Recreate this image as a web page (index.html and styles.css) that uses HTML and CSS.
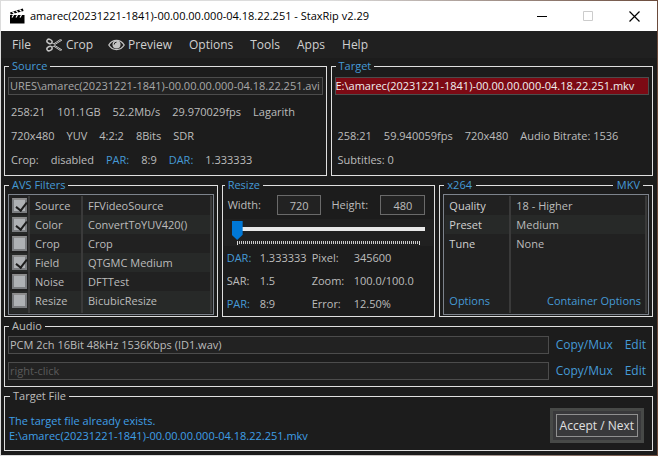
FILE: index.html
```html
<!DOCTYPE html>
<html lang="en">

<head>
    <meta charset="UTF-8">
    <meta name="viewport" content="width=device-width, initial-scale=1.0">
    <title>StaxRip</title>
    <link rel="stylesheet" href="styles.css">
</head>

<body>
    <div class="window">
        <header class="titlebar">
            <svg class="app-icon" viewBox="0 0 15 16" width="15" height="16">
                <path d="M0 4.600 12.800 0.400 13.600 3 0.800 6.600z" fill="#000" />
                <path d="M0 7h14.500v8.500H0z" fill="#000" />
                <path d="M2.500 3.800l2 2M6 2.600l2 2M9.500 1.500l2 2" stroke="#fff" stroke-width="1.300" />
                <path d="M2 9.500l1.500-2.500M6 9.500l1.500-2.500M10 9.500l1.500-2.500" stroke="#fff" stroke-width="1.200" />
            </svg>
            <span class="title">amarec(20231221-1841)-00.00.00.000-04.18.22.251 - StaxRip v2.29</span>
            <div class="window-buttons">
                <button type="button" aria-label="Minimize">
                    <svg viewBox="0 0 11 11" width="11" height="11"><path d="M0 5.500h10" stroke="#000" /></svg>
                </button>
                <button type="button" aria-label="Maximize" disabled>
                    <svg viewBox="0 0 11 11" width="11" height="11"><path d="M.5.5h9v9h-9z" fill="none" stroke="#ccc" /></svg>
                </button>
                <button type="button" aria-label="Close">
                    <svg viewBox="0 0 11 11" width="11" height="11"><path d="M.5.5l10 10M10.500.5l-10 10" stroke="#000" stroke-width="1.200" /></svg>
                </button>
            </div>
        </header>

        <nav class="menu">
            <button type="button">File</button>
            <button type="button">
                <svg viewBox="0 0 17 14" width="17" height="14" fill="none" stroke="#c4c4c4">
                    <ellipse cx="3.500" cy="3.400" rx="2.700" ry="2" transform="rotate(25 3.500 3.400)" stroke-width="1.500" />
                    <ellipse cx="3.500" cy="10.600" rx="2.700" ry="2" transform="rotate(-25 3.500 10.600)" stroke-width="1.500" />
                    <path d="M5.800 4.800 9 6.400 15.800 2.200 14 1.700 8 5.700M5.800 9.200 9 7.600l6.800 4.200-1.800.5L8 8.300" />
                </svg>
                Crop
            </button>
            <button type="button">
                <svg viewBox="0 0 17 14" width="17" height="14">
                    <path d="M.8 7C4.500.9 12.500.9 16.200 7 12.500 13.100 4.500 13.100.8 7z" fill="none" stroke="#c4c4c4" stroke-width="1.300" />
                    <circle cx="8.500" cy="6.500" r="4" fill="#c4c4c4" />
                    <path d="M6.200 6.500a2.300 2.300 0 0 1 2.300-2.300" fill="none" stroke="#202020" />
                </svg>
                Preview
            </button>
            <button type="button">Options</button>
            <button type="button">Tools</button>
            <button type="button">Apps</button>
            <button type="button">Help</button>
        </nav>

        <main>
            <div class="row two">
                <fieldset class="files">
                    <legend><a href="#">Source</a></legend>
                    <input class="source-file" type="text" aria-label="Source" value="URES\amarec(20231221-1841)-00.00.00.000-04.18.22.251.avi">
                    <div class="info">
                        <div><span>258:21</span><span>101.1GB</span><span>52.2Mb/s</span><span>29.970029fps</span><span>Lagarith</span></div>
                        <div><span>720x480</span><span>YUV</span><span>4:2:2</span><span>8Bits</span><span>SDR</span></div>
                        <div><span>Crop:</span><span>disabled</span><a href="#">PAR:</a><span>8:9</span><a href="#">DAR:</a><span>1.333333</span></div>
                    </div>
                </fieldset>
                <fieldset class="files">
                    <legend><a href="#">Target</a></legend>
                    <input class="exists" type="text" aria-label="Target" value="E:\amarec(20231221-1841)-00.00.00.000-04.18.22.251.mkv">
                    <div class="info">
                        <div></div>
                        <div><span>258:21</span><span>59.940059fps</span><span>720x480</span><span>Audio Bitrate: 1536</span></div>
                        <div><span>Subtitles: 0</span></div>
                    </div>
                </fieldset>
            </div>

            <div class="row three">
                <fieldset>
                    <legend><a href="#">AVS Filters</a></legend>
                    <table class="list filters">
                        <tr><td><input type="checkbox" id="f-source" checked></td><td><label for="f-source">Source</label></td><td>FFVideoSource</td></tr>
                        <tr><td><input type="checkbox" id="f-color" checked></td><td><label for="f-color">Color</label></td><td>ConvertToYUV420()</td></tr>
                        <tr><td><input type="checkbox" id="f-crop"></td><td><label for="f-crop">Crop</label></td><td>Crop</td></tr>
                        <tr><td><input type="checkbox" id="f-field" checked></td><td><label for="f-field">Field</label></td><td>QTGMC Medium</td></tr>
                        <tr><td><input type="checkbox" id="f-noise"></td><td><label for="f-noise">Noise</label></td><td>DFTTest</td></tr>
                        <tr><td><input type="checkbox" id="f-resize"></td><td><label for="f-resize">Resize</label></td><td>BicubicResize</td></tr>
                    </table>
                </fieldset>

                <fieldset class="resize">
                    <legend><a href="#">Resize</a></legend>
                    <div class="size">
                        <label for="width">Width:</label>
                        <input type="text" id="width" value="720">
                        <label for="height">Height:</label>
                        <input type="text" id="height" value="480">
                    </div>
                    <div class="slider">
                        <input type="range" min="0" max="90" value="0" aria-label="Size">
                        <div class="ticks"></div>
                    </div>
                    <div class="ratios">
                        <a href="#">DAR:</a><span>1.333333</span><span>Pixel:</span><span>345600</span>
                        <span>SAR:</span><span>1.5</span><span>Zoom:</span><span>100.0/100.0</span>
                        <a href="#">PAR:</a><span>8:9</span><span>Error:</span><span>12.50%</span>
                    </div>
                </fieldset>

                <fieldset>
                    <legend class="split"><a href="#">x264</a><span class="line"></span><a href="#">MKV</a></legend>
                    <table class="list encoder">
                        <tbody>
                            <tr><td>Quality</td><td>18 - Higher</td></tr>
                            <tr><td>Preset</td><td>Medium</td></tr>
                            <tr><td>Tune</td><td>None</td></tr>
                        </tbody>
                        <tfoot>
                            <tr><td><a href="#">Options</a></td><td><a href="#">Container Options</a></td></tr>
                        </tfoot>
                    </table>
                </fieldset>
            </div>

            <fieldset class="audio">
                <legend>Audio</legend>
                <div class="track">
                    <input type="text" aria-label="Audio track 1" value="PCM 2ch 16Bit 48kHz 1536Kbps (ID1.wav)">
                    <a href="#">Copy/Mux</a>
                    <a href="#">Edit</a>
                </div>
                <div class="track">
                    <input type="text" aria-label="Audio track 2" placeholder="right-click">
                    <a href="#">Copy/Mux</a>
                    <a href="#">Edit</a>
                </div>
            </fieldset>

            <fieldset class="target-file">
                <legend>Target File</legend>
                <div class="assistant">
                    <p>The target file already exists.<br>E:\amarec(20231221-1841)-00.00.00.000-04.18.22.251.mkv</p>
                    <button type="button"><span>Accept / Next</span></button>
                </div>
            </fieldset>
        </main>
    </div>
</body>

</html>
```
FILE: styles.css
```css
* {
    box-sizing: border-box;
}

body {
    margin: 0;
    padding: 1px;
    min-height: 100vh;
    background: linear-gradient(to right, #dcdcdc 50%, #6b4b3c 100%);
    font-family: "Open Sans", "Noto Sans", sans-serif;
    font-size: 11px;
    line-height: 18px;
    color: #bcbcbc;
}

a {
    color: #459ad6;
    text-decoration: none;
}

button, input {
    font: inherit;
    color: inherit;
    margin: 0;
}

.window {
    background-color: #1c1c1c;
}

/* Title bar */
.titlebar {
    display: flex;
    align-items: center;
    height: 30px;
    padding-left: 9px;
    background-color: #fff;
    color: #000;
}

.title {
    flex: 1;
    margin-left: 5px;
    white-space: nowrap;
}

.window-buttons {
    display: flex;
}

.window-buttons button {
    display: flex;
    align-items: center;
    justify-content: center;
    width: 46px;
    height: 30px;
    padding: 0;
    border: 0;
    background: none;
}

/* Menu */
.menu {
    display: flex;
    align-items: center;
    gap: 17px;
    height: 27px;
    padding-left: 11px;
    background-color: #202020;
}

.menu button {
    display: flex;
    align-items: center;
    gap: 3px;
    padding: 0;
    border: 0;
    background: none;
    color: #d0d0d0;
    font-size: 12px;
}

.menu button:nth-child(2), .menu button:nth-child(3) {
    margin-left: -2px;
}

/* Groups */
main {
    padding: 0 4px 4px 3px;
    margin-top: -1px;
}

.row {
    display: grid;
    gap: 4px;
}

.two {
    grid-template-columns: 1fr 1fr;
}

.three {
    grid-template-columns: 1fr 1fr 1fr;
}

fieldset {
    min-width: 0;
    margin: 0;
    padding: 0 3px 1px;
    border: 1px solid #e0e0e0;
}

legend {
    margin-left: 1px;
    padding: 0 3px;
}

.split {
    display: flex;
    align-items: center;
    width: calc(100% - 7px);
    gap: 4px;
}

.line {
    flex: 1;
    height: 1px;
    background-color: #e0e0e0;
}

input[type="text"] {
    display: block;
    width: 100%;
    height: 18px;
    padding: 0 1px;
    border: 1px solid #4c4c4c;
    border-radius: 0;
    background-color: #222;
    outline: none;
}

input::placeholder {
    color: #5a5a5a;
    opacity: 1;
}

/* Source and target */
.files {
    padding: 2px 3px 3px;
}

.files .source-file {
    color: #a8a8a8;
}

.files .exists {
    padding: 0;
    background-color: #7c0a14;
    color: #f0f0f0;
}

.info {
    padding: 5px 3px 0;
}

.info div {
    display: flex;
    gap: 12px;
    height: 24px;
    line-height: 24px;
    white-space: nowrap;
}

/* Lists */
.list {
    width: 100%;
    table-layout: fixed;
    border-collapse: separate;
    border-spacing: 0;
    padding: 1px;
    border: 1px solid #7d838c;
    background-color: #212121;
}

.list td {
    height: 19px;
    padding: 0 4px 0 5px;
    border-right: 2px solid #3a3a3a;
    line-height: 19px;
    white-space: nowrap;
}

.list tr:nth-child(even) {
    background-color: #272928;
}

.filters td:first-child {
    width: 20px;
    padding: 0 0 0 2px;
}

.filters td:nth-child(2) {
    width: 53px;
}

.filters tr:last-child td {
    height: 22px;
    padding-bottom: 3px;
}

.encoder td:first-child {
    width: 66px;
    padding-left: 4px;
    color: #d0d0d0;
}

.encoder tfoot td {
    height: 60px;
    padding-bottom: 3px;
    vertical-align: bottom;
}

.encoder tfoot td:last-child {
    text-align: right;
}

input[type="checkbox"] {
    appearance: none;
    display: block;
    width: 15px;
    height: 15px;
    border: 2px solid #7b7d80;
    border-top-color: #8d8d8d;
    background-color: #aeb1b4;
}

input[type="checkbox"]:checked::before {
    content: '';
    display: block;
    width: 5px;
    height: 9px;
    margin: 0 0 0 4px;
    border: solid #1c1c1c;
    border-width: 0 2px 2px 0;
    transform: rotate(38deg);
}

/* Resize */
.resize {
    padding: 1px 1px 0;
}

.size {
    display: grid;
    grid-template-columns: 44px 1fr 49px 1fr;
    column-gap: 5px;
    align-items: center;
    padding: 0 8px 4px 4px;
}

.size label:nth-of-type(2) {
    padding-left: 5px;
}

.size input[type="text"] {
    height: 20px;
    border-color: #6a6a6a;
    text-align: center;
}

.slider {
    height: 27px;
    padding: 2px 8px 0;
    background-color: #202020;
}

.slider input {
    appearance: none;
    display: block;
    width: 100%;
    height: 19px;
    background: linear-gradient(#e8e8e8, #e8e8e8) center 6px / 100% 4px no-repeat;
    outline: none;
}

.slider input::-webkit-slider-thumb {
    appearance: none;
    width: 11px;
    height: 19px;
    background-color: #0078d7;
    clip-path: polygon(0 0, 100% 0, 100% 72%, 50% 100%, 0 72%);
}

.ticks {
    height: 4px;
    margin: 1px 5px 0;
    border: solid #d8d8d8;
    border-width: 0 1px;
    background: repeating-linear-gradient(to right, transparent 0 1px, #c8c8c8 1px 2px) 0 0 / 100% 3px no-repeat;
}

.ratios {
    display: grid;
    grid-template-columns: 33px 52px 42px 1fr;
    grid-auto-rows: 23px;
    line-height: 23px;
    padding-left: 3px;
}

/* Audio */
.audio {
    padding: 1px 6px 6px 3px;
}

.track {
    display: flex;
    align-items: center;
    font-size: 12px;
}

.track + .track {
    margin-top: 8px;
}

.track input[type="text"] {
    flex: 1;
    width: auto;
    min-width: 0;
    margin-right: 7px;
    font-size: 11px;
}

.track a + a {
    margin-left: 12px;
}

/* Target file */
.target-file {
    padding: 3px 8px 7px 4px;
}

.assistant {
    display: flex;
    align-items: center;
    justify-content: space-between;
}

.assistant p {
    margin: 4px 0 0;
    line-height: 15px;
    color: #3f9fe6;
}

.assistant button {
    padding: 3px;
    border: 3px solid #474947;
    background-color: #39393b;
    color: #e0e0e0;
    font-size: 12px;
    white-space: nowrap;
}

.assistant button span {
    display: block;
    padding: 0 3px;
    border: 1px solid #909090;
    line-height: 21px;
}
```
